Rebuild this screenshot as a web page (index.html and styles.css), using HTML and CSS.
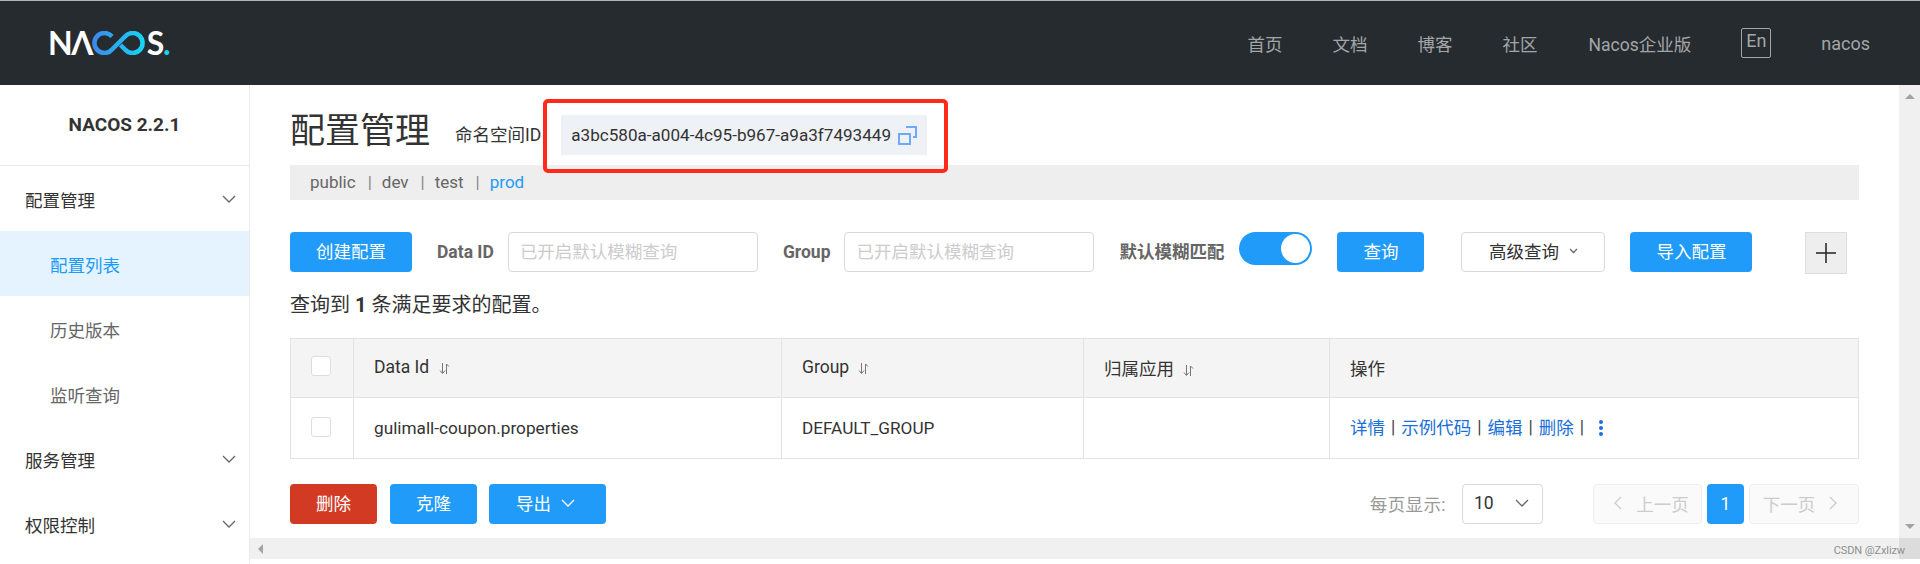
FILE: index.html
```html
<!DOCTYPE html>
<html lang="zh-CN">
<head>
  <meta charset="utf-8">
  <meta name="viewport" content="width=device-width, initial-scale=1.0">
  <title>Nacos</title>
  <link rel="stylesheet" href="styles.css">
</head>
<body>
  <header class="topbar">
    <div class="logo" aria-label="NACOS">
      <span>NΛ</span>
      <svg class="logo-loop" width="54" height="24" viewBox="0 0 54 24" fill="none">
        <defs>
          <linearGradient id="loopGrad" x1="0" y1="0" x2="1" y2="0">
            <stop offset="0" stop-color="#3a8bec"/>
            <stop offset="1" stop-color="#18d2f6"/>
          </linearGradient>
        </defs>
        <path d="M20 5.500A10 10 0 1 0 20 18.500L33 5.500A10 10 0 1 1 33 18.500L28.500 14" stroke="url(#loopGrad)" stroke-width="4.500"/>
      </svg>
      <span>S</span><span class="logo-dot">.</span>
    </div>
    <nav class="topnav">
      <a class="nav-home">首页</a>
      <a class="nav-docs">文档</a>
      <a class="nav-blog">博客</a>
      <a class="nav-comm">社区</a>
      <a class="nav-ent">Nacos企业版</a>
      <a class="nav-lang">En</a>
      <a class="nav-user">nacos</a>
    </nav>
  </header>

  <div class="layout">
    <aside class="sidebar">
      <div class="side-title">NACOS 2.2.1</div>
      <div class="side-head">配置管理
        <svg class="chev" width="14" height="8" viewBox="0 0 14 8"><path d="M1 1l6 6 6-6"/></svg>
      </div>
      <div class="side-sub active">配置列表</div>
      <div class="side-sub">历史版本</div>
      <div class="side-sub">监听查询</div>
      <div class="side-head">服务管理
        <svg class="chev" width="14" height="8" viewBox="0 0 14 8"><path d="M1 1l6 6 6-6"/></svg>
      </div>
      <div class="side-head">权限控制
        <svg class="chev" width="14" height="8" viewBox="0 0 14 8"><path d="M1 1l6 6 6-6"/></svg>
      </div>
    </aside>

    <div class="main">
      <main class="page">
        <div class="title-row">
          <h1>配置管理</h1>
          <span class="ns-label">命名空间ID</span>
          <span class="ns-chip">a3bc580a-a004-4c95-b967-a9a3f7493449
            <svg width="19" height="19" viewBox="0 0 19 19" fill="none" stroke="#6fa8ff" stroke-width="2">
              <rect x="1" y="8" width="11" height="10"/>
              <path d="M8 1h10v10h-3"/>
            </svg>
          </span>
        </div>
        <div class="annotation"></div>

        <div class="ns-bar">
          <span>public</span><i>|</i>
          <span>dev</span><i>|</i>
          <span>test</span><i>|</i>
          <span class="current">prod</span>
        </div>

        <div class="toolbar">
          <button class="btn primary w122">创建配置</button>
          <label class="field-label l-dataid">Data ID</label>
          <input class="search" placeholder="已开启默认模糊查询">
          <label class="field-label l-group">Group</label>
          <input class="search" placeholder="已开启默认模糊查询">
          <label class="field-label l-fuzzy">默认模糊匹配</label>
          <span class="toggle"><b></b></span>
          <button class="btn primary w87 b-query">查询</button>
          <button class="btn plain b-adv">高级查询
            <svg class="chev small" width="9" height="6" viewBox="0 0 9 6"><path d="M1 1l3.500 3.500L8 1"/></svg>
          </button>
          <button class="btn primary w122 b-import">导入配置</button>
          <span class="plus-box">
            <svg width="20" height="20" viewBox="0 0 20 20"><path d="M10 0v20M0 10h20" stroke="#222" stroke-width="1.500"/></svg>
          </span>
        </div>

        <p class="result">查询到 <b>1</b> 条满足要求的配置。</p>

        <table class="grid">
          <colgroup>
            <col class="c-check"><col class="c-id"><col class="c-group"><col class="c-app"><col>
          </colgroup>
          <thead>
            <tr>
              <th><span class="check"></span></th>
              <th>Data Id <svg class="sort" width="11" height="13" viewBox="0 0 11 13"><path d="M3.500 1v10M1 8.500l2.500 3 2.500-3"/><path d="M7.500 12V2l2.500 2.500"/></svg></th>
              <th>Group <svg class="sort" width="11" height="13" viewBox="0 0 11 13"><path d="M3.500 1v10M1 8.500l2.500 3 2.500-3"/><path d="M7.500 12V2l2.500 2.500"/></svg></th>
              <th>归属应用 <svg class="sort" width="11" height="13" viewBox="0 0 11 13"><path d="M3.500 1v10M1 8.500l2.500 3 2.500-3"/><path d="M7.500 12V2l2.500 2.500"/></svg></th>
              <th>操作</th>
            </tr>
          </thead>
          <tbody>
            <tr>
              <td><span class="check"></span></td>
              <td class="cell-text">gulimall-coupon.properties</td>
              <td class="cell-text">DEFAULT_GROUP</td>
              <td></td>
              <td>
                <div class="ops">
                  <a>详情</a><i>|</i><a>示例代码</a><i>|</i><a>编辑</a><i>|</i><a>删除</a><i>|</i>
                  <svg width="8" height="18" viewBox="0 0 8 18" fill="#1a6fd8"><circle cx="4" cy="3" r="2"/><circle cx="4" cy="9" r="2"/><circle cx="4" cy="15" r="2"/></svg>
                </div>
              </td>
            </tr>
          </tbody>
        </table>

        <div class="footer-row">
          <button class="btn danger w87">删除</button>
          <button class="btn primary w87 b-clone">克隆</button>
          <button class="btn primary b-export">导出
            <svg class="chev light" width="14" height="8" viewBox="0 0 14 8"><path d="M1 1l6 6 6-6"/></svg>
          </button>
          <span class="page-label">每页显示:</span>
          <span class="page-size">10
            <svg class="chev" width="14" height="8" viewBox="0 0 14 8"><path d="M1 1l6 6 6-6"/></svg>
          </span>
          <span class="pager prev">
            <svg width="8" height="14" viewBox="0 0 8 14"><path d="M7 1L1 7l6 6"/></svg>上一页
          </span>
          <span class="pager-num">1</span>
          <span class="pager next">下一页
            <svg width="8" height="14" viewBox="0 0 8 14"><path d="M1 1l6 6-6 6"/></svg>
          </span>
        </div>
      </main>

      <div class="vscroll"><i class="arrow up"></i><i class="arrow down"></i></div>
      <div class="hscroll"><i class="arrow left"></i></div>
      <div class="corner"></div>
    </div>
  </div>

  <div class="watermark">CSDN @Zxlizw</div>
</body>
</html>
```

FILE: styles.css
```css
* { box-sizing: border-box; }
html, body { margin: 0; padding: 0; height: 100%; }
body {
  display: flex; flex-direction: column;
  height: 100vh; overflow: hidden;
  font-family: Roboto, "Noto Sans CJK SC", sans-serif;
  font-size: 17.5px; color: #333;
  background: #fff;
}

/* Top bar */
.topbar {
  flex: none; height: 85px;
  display: flex; align-items: center; justify-content: space-between;
  background: #262b30;
  border-top: 1px solid #b5b5b5;
}
.logo {
  display: flex; align-items: center;
  margin-left: 48px; height: 24px;
  font-family: Lato, sans-serif; font-size: 32px; font-weight: 700;
  letter-spacing: -1.5px;
  color: #fff; line-height: 24px;
}
.logo-loop { margin: 0 1px 0 0; }
.logo-dot { color: #18d2f6; }
.topnav { display: flex; align-items: center; margin-right: 50px; color: #a3a6a8; }
.topnav a { display: block; }
.nav-docs, .nav-blog, .nav-comm { margin-left: 50px; }
.nav-ent { margin-left: 51px; }
.nav-lang {
  margin-left: 50px; width: 30px; height: 30px;
  border: 1px solid #a3a6a8; border-radius: 2px;
  text-align: center; line-height: 24px; font-size: 18px;
}
.nav-user { margin-left: 50px; font-size: 18px; }

.layout { flex: 1; display: flex; min-height: 0; }

/* Sidebar */
.sidebar { flex: none; width: 250px; border-right: 1px solid #eaeaea; }
.side-title {
  height: 81px; padding-top: 24px;
  border-bottom: 1px solid #eaeaea;
  text-align: center; font-weight: 700; font-size: 19px; color: #333;
  line-height: 32px;
}
.side-head {
  height: 65px; padding: 1px 13px 0 25px;
  display: flex; align-items: center; justify-content: space-between;
  color: #333;
}
.side-sub {
  height: 65px; padding: 2px 0 0 50px;
  display: flex; align-items: center;
  color: #666;
}
.side-sub.active { background: #e4f3fe; color: #209bfa; }
.chev { fill: none; stroke: #666; stroke-width: 1.3; }
.chev.small { margin-left: 10px; }
.chev.light { stroke: #fff; margin-left: 10px; }

/* Main */
.main {
  flex: 1; min-width: 0;
  display: grid;
  grid-template-columns: 1fr 21px;
  grid-template-rows: 1fr 21px;
  padding-bottom: 5px;
}
.page { position: relative; padding: 30px 40px 0; overflow: hidden; min-width: 0; }
.title-row { display: flex; align-items: center; height: 50px; padding-bottom: 10px; }
h1 { margin: -6px 0 0; font-size: 35px; font-weight: 400; color: #333; line-height: 40px; }
.ns-label { margin: -4px 0 0 25px; }
.ns-chip {
  display: flex; align-items: center; gap: 7px;
  margin-left: 20px; width: 366px; height: 40px;
  padding-left: 10px;
  background: #eef1f6;
  font-size: 17.1px;
}
.annotation {
  position: absolute; left: 293px; top: 14px;
  width: 405px; height: 74px;
  border: 4px solid #ff2a1a; border-radius: 5px;
}

.ns-bar {
  display: flex; align-items: center;
  height: 35px; padding: 0 0 2px 20px;
  background: #eee; color: #666;
  font-size: 17px;
}
.ns-bar i { font-style: normal; margin: 0 10px 0 12px; color: #888; }
.ns-bar .current { color: #209bfa; }

.toolbar { display: flex; align-items: flex-start; height: 42px; margin-top: 32px; }
.btn {
  height: 40px; padding: 0 0 3px;
  border: none; border-radius: 4px;
  font: inherit; color: #fff;
  display: inline-flex; align-items: center; justify-content: center;
}
.primary { background: #209bfa; }
.danger { background: #d23a24; }
.plain { width: 144px; background: #fff; color: #333; border: 1px solid #d8d8d8; }
.w122 { width: 122px; }
.w87 { width: 87px; }
.field-label { font-weight: 700; color: #666; line-height: 40px; }
.l-dataid { margin: 0 14px 0 25px; }
.l-group { margin: 0 14px 0 25px; }
.l-fuzzy { margin: 0 15px 0 25px; }
.search {
  width: 250px; height: 40px; padding: 0 11px;
  border: 1px solid #d8d8d8; border-radius: 4px;
  font: inherit; background: #fff;
}
.search::placeholder { color: #ccc; opacity: 1; }
.toggle {
  display: flex; justify-content: flex-end; align-items: center;
  width: 73px; height: 33px; padding-right: 2px;
  border-radius: 17px; background: #209bfa;
}
.toggle b { width: 29px; height: 29px; border-radius: 50%; background: #fff; }
.b-query { margin-left: 25px; }
.b-adv { margin-left: 37px; }
.b-import { margin-left: 25px; }
.plus-box {
  display: flex; align-items: center; justify-content: center;
  width: 42px; height: 42px; margin-left: 53px;
  background: #eee; border: 1px solid #ddd;
}

.result { margin: 11px 0 13px; height: 40px; line-height: 40px; font-size: 20px; color: #333; }

.grid {
  width: 1569px; table-layout: fixed;
  border-collapse: collapse;
  border: 1px solid #e3e3e3;
}
.c-check { width: 63px; }
.c-id { width: 428px; }
.c-group { width: 302px; }
.c-app { width: 246px; }
.grid th, .grid td {
  padding: 0 0 0 20px;
  border: 1px solid #e3e3e3;
  font-weight: 400; text-align: left; color: #333;
}
.grid th { height: 59px; padding-bottom: 2px; background: #f4f4f4; }
.grid td { height: 61px; }
.grid .cell-text { font-size: 17.2px; padding-bottom: 1px; }
.check {
  display: block; width: 20px; height: 20px; margin-top: -2px;
  border: 1px solid #ddd; border-radius: 3px; background: #fff;
}
.sort { margin-left: 5px; vertical-align: -2px; fill: none; stroke: #777; stroke-width: 1; }
.ops { display: flex; align-items: center; gap: 6px; padding-bottom: 3px; }
.ops a { color: #1a6fd8; }
.ops i { font-style: normal; color: #444; }
.ops svg { margin: 3px 0 0 7px; }

.footer-row { display: flex; align-items: center; margin-top: 25px; height: 40px; }
.b-clone { margin-left: 13px; }
.b-export { width: 117px; margin-left: 12px; padding-right: 4px; }
.page-label { margin-left: auto; color: #999; letter-spacing: .4px; padding-bottom: 2px; }
.page-size {
  display: flex; align-items: center; justify-content: space-between;
  width: 81px; height: 40px; margin-left: 16px; padding: 0 13px 2px 11px;
  border: 1px solid #d8d8d8; border-radius: 4px;
}
.pager {
  display: flex; align-items: center; justify-content: center; gap: 14px;
  width: 110px; height: 40px; padding-bottom: 2px;
  background: #fafafa; border: 1px solid #eee; border-radius: 4px;
  color: #ccc;
}
.pager svg { fill: none; stroke: #ccc; stroke-width: 1.3; }
.prev { width: 109px; margin-left: 50px; padding-left: 8px; }
.next { padding-right: 8px; }
.pager-num {
  display: flex; align-items: center; justify-content: center;
  width: 37px; height: 40px; margin: 0 5px;
  background: #209bfa; color: #fff; border-radius: 4px;
}

/* Scrollbars */
.vscroll, .hscroll { display: flex; background: #f0f0f0; }
.vscroll { flex-direction: column; align-items: center; justify-content: space-between; padding: 9px 0; }
.hscroll { align-items: center; padding-left: 8px; }
.corner { background: #dcdcdc; }
.arrow { display: block; width: 0; height: 0; border: 0 solid transparent; }
.arrow.up { border-width: 0 5px 5px; border-bottom-color: #a3a3a3; }
.arrow.down { border-width: 5px 5px 0; border-top-color: #a3a3a3; }
.arrow.left { border-width: 5px 5px 5px 0; border-right-color: #a3a3a3; }

.watermark {
  position: absolute; right: 15px; bottom: 7px;
  font-size: 11px; letter-spacing: -.1px; color: #8f8f8f;
}
```
